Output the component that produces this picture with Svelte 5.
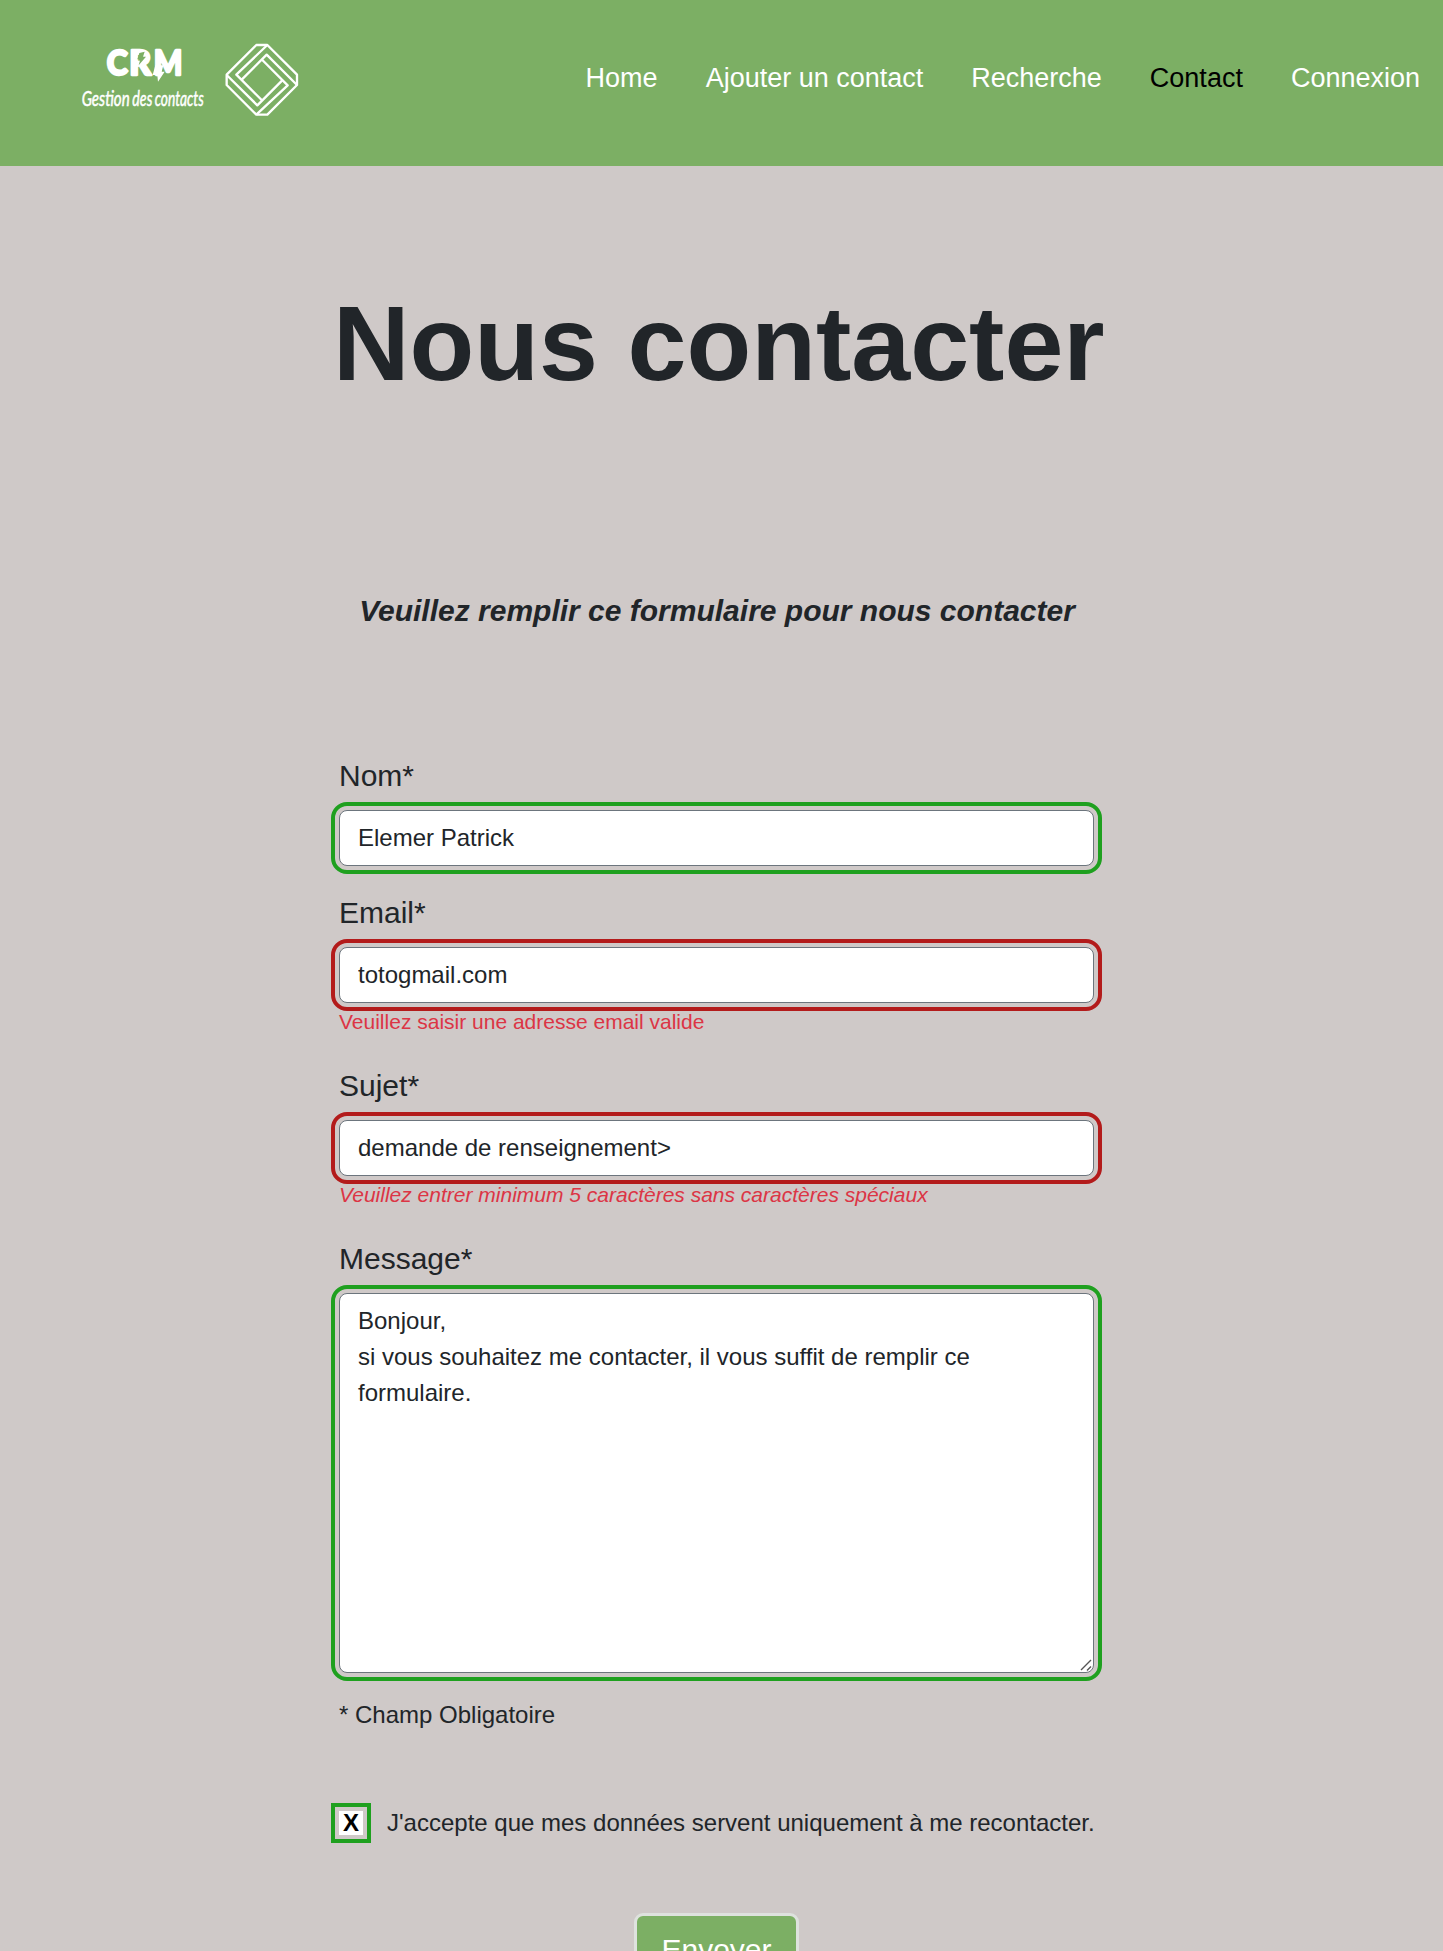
<script>
  const links = ['Home', 'Ajouter un contact', 'Recherche', 'Contact', 'Connexion'];
  let nom = $state('Elemer Patrick');
  let email = $state('totogmail.com');
  let sujet = $state('demande de renseignement>');
  let message = $state('Bonjour,\nsi vous souhaitez me contacter, il vous suffit de remplir ce formulaire.');
  let accepted = $state(true);
</script>

<header>
  <svg class="logo" viewBox="0 0 780 270" aria-label="CRM Gestion des contacts">
    <g class="crm">
      <text x="140" y="166" textLength="63" lengthAdjust="spacingAndGlyphs">C</text>
      <text x="208" y="166" textLength="66" lengthAdjust="spacingAndGlyphs">R</text>
      <text x="281" y="166" textLength="86" lengthAdjust="spacingAndGlyphs">M</text>
    </g>
    <path d="M286 136h24l-5 19h9l-20 30-2-20h-14z" fill="#fff" />
    <path d="M170 118l9-5-2 12h6l-12 16 2-12h-8zM238 99l16-4-5 15h9l-22 26 5-18h-9z" fill="#7caf64" />
    <g class="tagline">
      <text x="65" y="258" textLength="144" lengthAdjust="spacingAndGlyphs">Gestion</text>
      <text x="217" y="258" textLength="60" lengthAdjust="spacingAndGlyphs">des</text>
      <text x="284" y="258" textLength="147" lengthAdjust="spacingAndGlyphs">contacts</text>
    </g>
    <g fill="none" stroke="#fff" stroke-width="7" stroke-linejoin="round">
      <path d="M589 75H622L711 164V195L622 284H589L500 195V164Z" />
      <path d="M622 75L529 164L606.5 241.5M589 284L683 196L605.5 118.5" />
      <path d="M711 195L620 104L544.5 179.5M500 165L592 256L667.5 180.5" />
    </g>
  </svg>
  <nav>
    {#each links as link}
      <a href="#top" class:active={link === 'Contact'}>{link}</a>
    {/each}
  </nav>
</header>

<main>
  <h1>Nous contacter</h1>
  <h2>Veuillez remplir ce formulaire pour nous contacter</h2>
  <form novalidate>
    <div class="field">
      <label for="nom">Nom*</label>
      <input id="nom" class="valid" bind:value={nom} />
    </div>
    <div class="field error">
      <label for="email">Email*</label>
      <input id="email" class="invalid" bind:value={email} />
      <p>Veuillez saisir une adresse email valide</p>
    </div>
    <div class="field error">
      <label for="sujet">Sujet*</label>
      <input id="sujet" class="invalid" bind:value={sujet} />
      <p class="italic">Veuillez entrer minimum 5 caractères sans caractères spéciaux</p>
    </div>
    <div class="field message">
      <label for="message">Message*</label>
      <div class="area">
        <textarea id="message" class="valid" bind:value={message}></textarea>
        <svg class="grip" viewBox="0 0 12 12"><path d="M1 11L11 1M7 11.5L11 7.5" /></svg>
      </div>
    </div>
    <p class="required">* Champ Obligatoire</p>
    <div class="consent">
      <button type="button" class="check valid" onclick={() => (accepted = !accepted)}>{accepted ? 'X' : ''}</button>
      <span>J'accepte que mes données servent uniquement à me recontacter.</span>
    </div>
    <button type="submit" class="send">Envoyer</button>
  </form>
</main>

<style>
  :global(body) { margin: 0; background: #cfc9c8; height: 1951px; overflow: hidden; }
  header, main { font-family: 'Liberation Sans', Arial, sans-serif; color: #212529; box-sizing: border-box; }
  header { height: 166px; background: #7caf64; display: flex; justify-content: space-between; padding: 20px 23px 0 60px; }
  .logo { width: 260px; height: 90px; overflow: visible; flex: none; }
  .crm { font: 900 102px Lato, sans-serif; fill: #fff; stroke: #fff; stroke-width: 7; stroke-linejoin: round; }
  .tagline { font: italic 62px Lato, sans-serif; fill: #fff; stroke: #fff; stroke-width: 1.5; }
  nav { display: flex; gap: 48px; padding-top: 38px; font-size: 27px; line-height: 40px; white-space: nowrap; }
  a { color: #fff; text-decoration: none; }
  a.active { color: #000; }
  main { width: 755px; margin-left: 339px; display: flex; flex-direction: column; }
  h1 { margin: 114px 0 0 -6px; font-size: 106px; line-height: 127px; white-space: nowrap; }
  h2 { margin: 186px 0 0 1px; text-align: center; font-size: 30px; line-height: 36px; font-style: italic; white-space: nowrap; }
  form { display: flex; flex-direction: column; margin-top: 124px; }
  .field { display: flex; flex-direction: column; height: 137px; }
  .field.error { height: 173px; }
  .field.message { height: 438px; }
  label { font-size: 30px; line-height: 45px; margin-bottom: 12px; }
  input, textarea { display: block; box-sizing: border-box; width: 100%; height: 56px; border: 1px solid #6c757d; border-radius: 8px; background: #fff; color: #212529; font: 24px/36px 'Liberation Sans', Arial, sans-serif; padding: 9px 18px; margin: 0; }
  .valid { outline: 4px solid #1fa01f; outline-offset: 4px; }
  .invalid { outline: 4px solid #b31b1b; outline-offset: 4px; }
  .area { position: relative; }
  textarea { height: 380px; resize: none; }
  .grip { position: absolute; right: 2px; bottom: 2px; width: 12px; height: 12px; fill: none; stroke: #555; stroke-width: 1.4; }
  p { margin: 3px 0 0; color: #dc3545; font-size: 21px; line-height: 32px; }
  .italic { font-style: italic; }
  .required { color: #212529; font-size: 24px; line-height: 36px; margin-top: 23px; }
  .consent { display: flex; align-items: center; gap: 24px; margin-top: 72px; font-size: 24px; line-height: 36px; white-space: nowrap; }
  .check { width: 24px; height: 24px; flex: none; border: 0; padding: 0; background: #fff; color: #000; font: bold 24px/24px 'Liberation Sans', sans-serif; }
  .send { align-self: center; width: 165px; height: 71px; margin-top: 72px; box-sizing: border-box; border: 3px solid #dee2de; border-radius: 9px; background: #7caf64; color: #fff; font: 30px/45px 'Liberation Sans', sans-serif; padding: 10px 0 8px; }
</style>
